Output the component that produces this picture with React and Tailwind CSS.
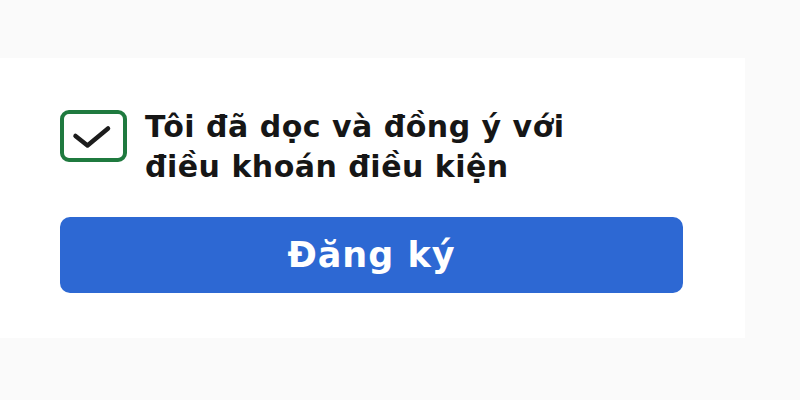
export default function App() {
  return (
    <div className="w-[800px] h-[400px] bg-[#fafafa] pt-[58px]" style={{ fontFamily: "'DejaVu Sans', 'Noto Sans', sans-serif" }}>
      <div className="w-[745px] h-[280px] bg-white pl-[60px] pt-[52px]">
        <div className="flex items-start">
          <div className="w-[67px] h-[52px] border-[4px] border-[#1f7a3f] rounded-[9px] flex items-center justify-center">
            <svg width="44" height="30" viewBox="0 0 44 30" fill="none">
              <path d="M3.5 15 L15.5 24.5 L36 7.5" stroke="#1c1c1c" strokeWidth="4.5" strokeLinecap="round" strokeLinejoin="round" />
            </svg>
          </div>
          <div className="ml-[18px] mt-[-3px] text-[30px] leading-[40px] font-bold tracking-[0.5px] text-[#161616]">
            <div>Tôi đã dọc và đồng ý với</div>
            <div>điều khoán điều kiện</div>
          </div>
        </div>
        <button className="mt-[30px] w-[623px] h-[76px] rounded-[10px] bg-[#2d68d3] text-white text-[35px] font-bold tracking-[1px] flex items-center justify-center">
          Đăng ký
        </button>
      </div>
    </div>
  );
}
